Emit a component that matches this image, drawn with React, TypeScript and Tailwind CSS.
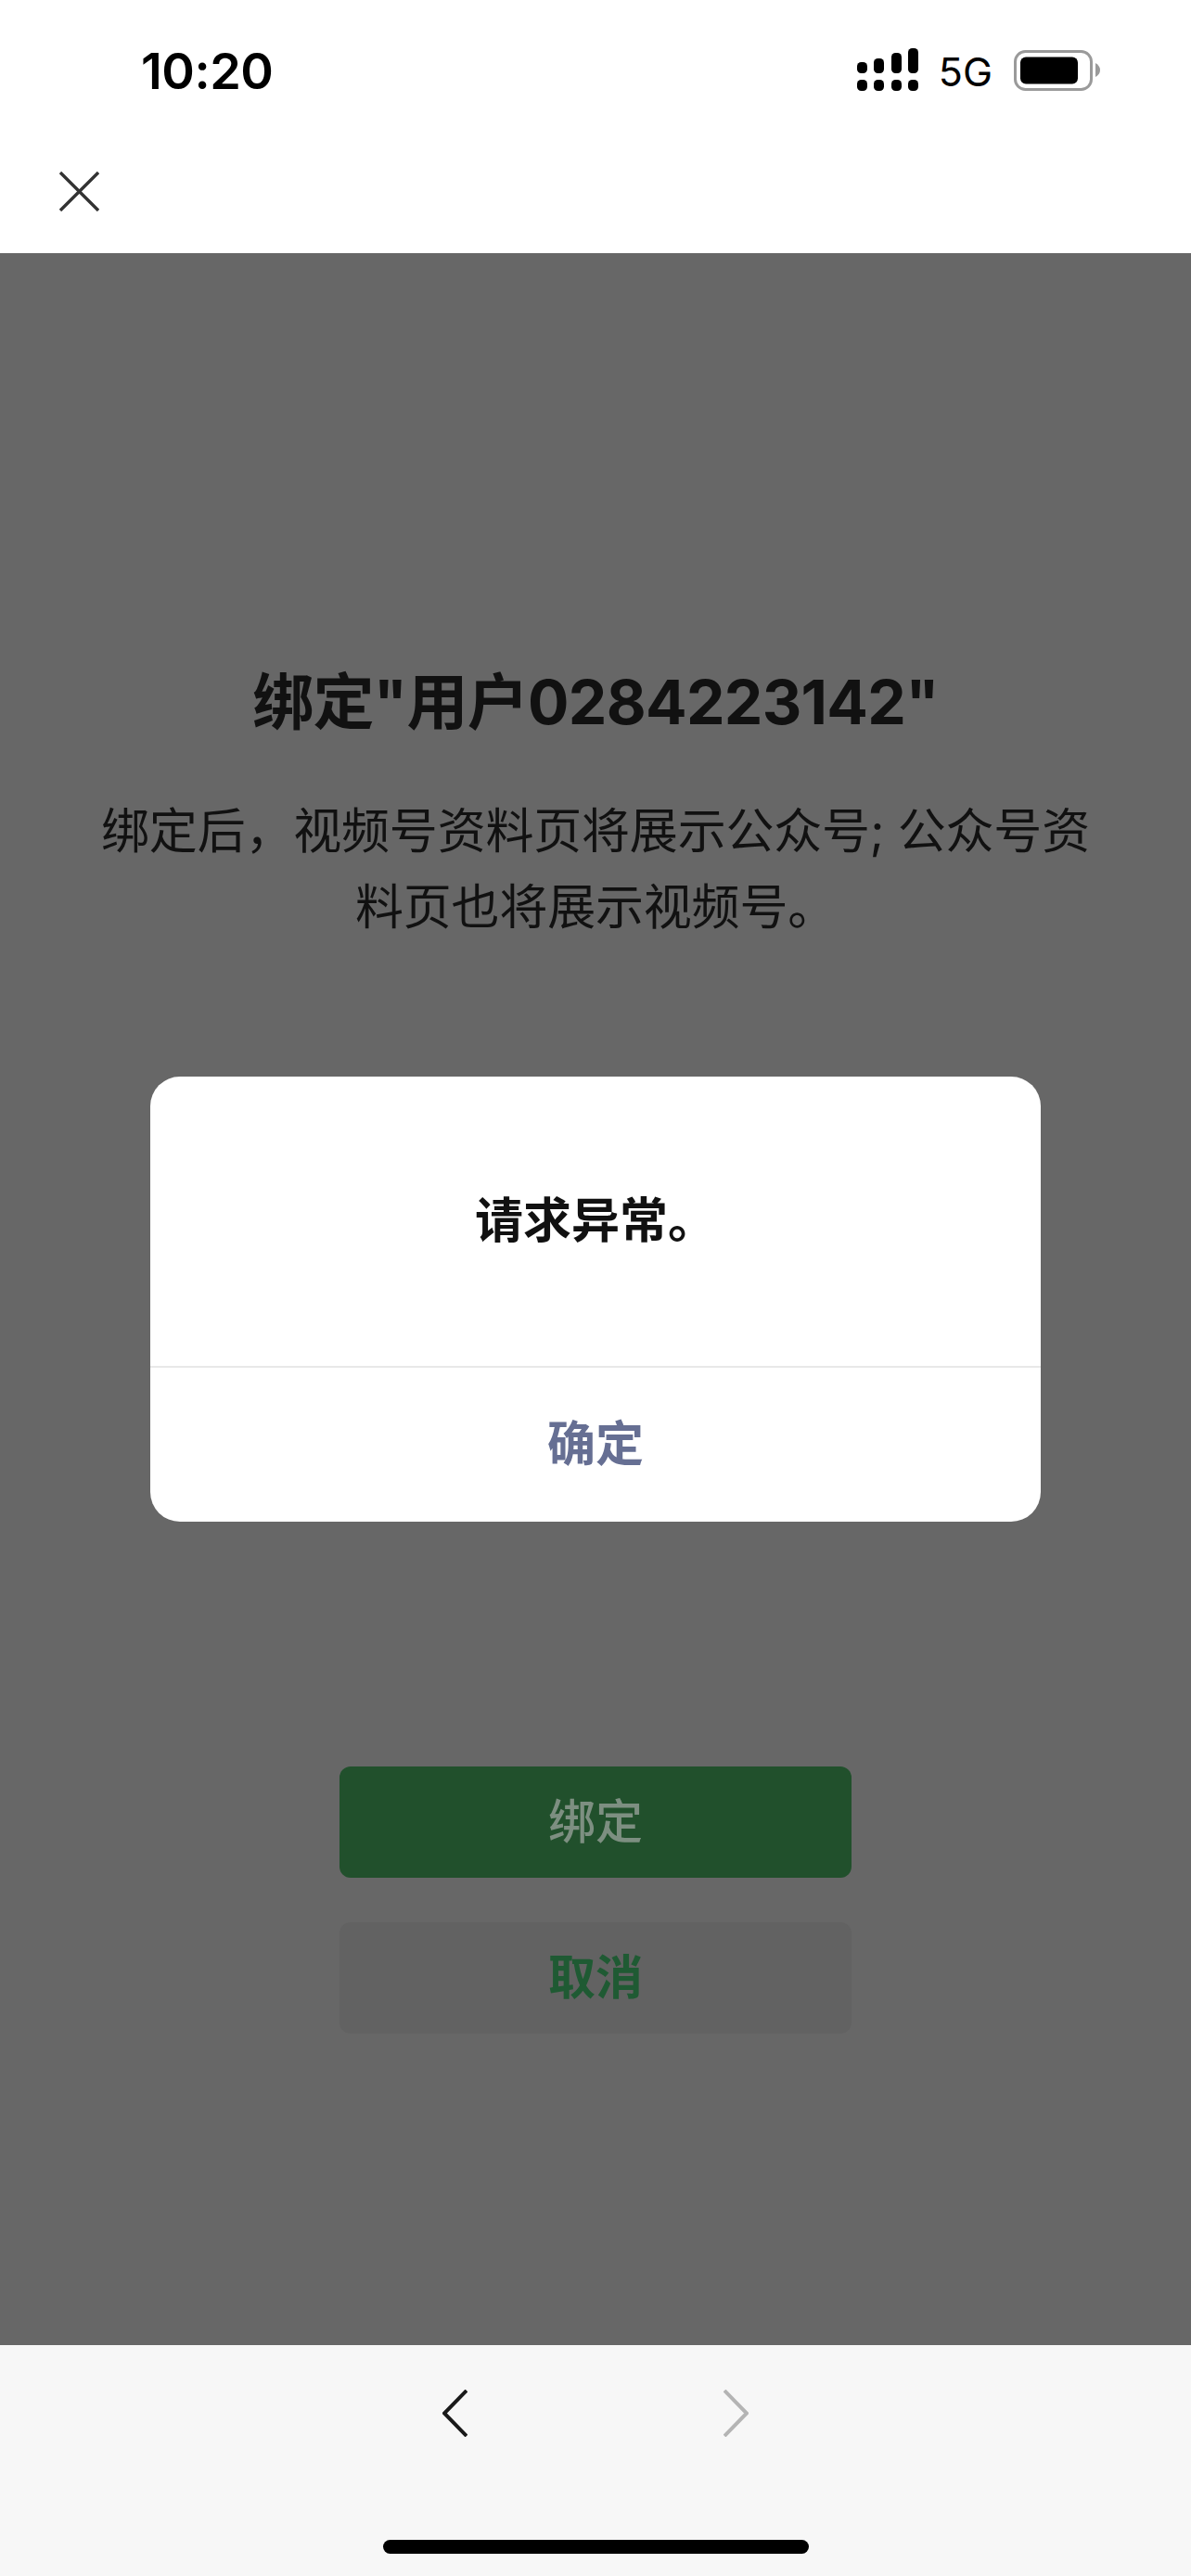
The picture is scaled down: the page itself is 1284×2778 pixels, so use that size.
export default function App() {
  const font = { fontFamily: 'Inter, "Noto Sans CJK SC", sans-serif' };
  return (
    <div style={font} className="flex h-[2778px] w-full flex-col overflow-hidden bg-white">
      <header className="h-[273px] shrink-0 bg-white pt-[46px]">
        <div className="flex h-[60px] items-center pl-[152px] pr-[98px]">
          <span className="translate-y-[1px] text-[54px] font-semibold leading-[60px] tracking-[-0.5px] text-black">10:20</span>
          <div className="ml-auto flex items-center">
            <svg className="-translate-y-[1px]" width="66" height="46" viewBox="0 0 66 46" fill="black">
              <rect x="0" y="34" width="11" height="12" rx="4.5" />
              <rect x="18" y="34" width="11" height="12" rx="4.5" />
              <rect x="37" y="34" width="11" height="12" rx="4.5" />
              <rect x="55" y="34" width="11" height="12" rx="4.5" />
              <rect x="0" y="15" width="11" height="12" rx="4.5" />
              <rect x="18" y="11" width="11" height="16" rx="4.5" />
              <rect x="37" y="5" width="11" height="22" rx="4.5" />
              <rect x="55" y="0" width="11" height="27" rx="4.5" />
            </svg>
            <span className="ml-[22px] translate-y-[1px] text-[43px] leading-[60px] text-black">5G</span>
            <svg className="ml-[23px]" width="93" height="44" viewBox="0 0 93 44">
              <rect x="1.5" y="1.5" width="82" height="41" rx="11" fill="none" stroke="#9a9a9a" strokeWidth="3" />
              <rect x="7" y="7.5" width="62" height="29" rx="6" fill="black" />
              <path d="M88 14 L88 29 Q93 26 93 21.5 Q93 17 88 14 Z" fill="#9a9a9a" />
            </svg>
          </div>
        </div>
        <div className="pl-[64px] pt-[79px]">
          <svg width="43" height="43" viewBox="0 0 43 43" stroke="#333333" strokeWidth="3.4" fill="none">
            <path d="M1 1 L42 42 M42 1 L1 42" />
          </svg>
        </div>
      </header>

      <main className="relative flex flex-1 flex-col items-center bg-[#676767] pt-[439px]">
        <h1 className="text-[66px] font-bold leading-[90px] tracking-[-0.7px] text-[#111111]">绑定"用户0284223142"</h1>
        <p className="mt-[54px] w-[1090px] text-center text-[52px] leading-[82px] tracking-[-0.2px] text-[#111111]">
          绑定后，视频号资料页将展示公众号; 公众号资料页也将展示视频号。
        </p>
        <div className="mt-[885px] flex flex-col gap-[48px]">
          <button className="flex h-[120px] w-[552px] items-center justify-center rounded-[12px] bg-[#21502c] pt-[1px] text-[51px] font-medium text-[#7d8f81]">
            绑定
          </button>
          <button className="flex h-[120px] w-[552px] items-center justify-center rounded-[12px] bg-[#626262] pt-[1px] text-[51px] font-bold text-[#1f5a33]">
            取消
          </button>
        </div>

        <div className="absolute left-[162px] top-[888px] flex h-[480px] w-[960px] flex-col rounded-[32px] bg-white">
          <div className="flex h-[314px] items-center justify-center border-b-2 border-[#e8e8e8]">
            <span className="text-[52px] font-bold leading-[70px] text-[#111111]">请求异常。</span>
          </div>
          <div className="flex flex-1 items-center justify-center text-[52px] font-bold text-[#666f93]">确定</div>
        </div>
      </main>

      <footer className="relative h-[249px] shrink-0 bg-[#f7f7f7]">
        <div className="flex items-start gap-[276px] pl-[477px] pt-[48px]">
          <svg width="27" height="51" viewBox="0 0 27 51" fill="none" stroke="#1a1a1a" strokeWidth="4">
            <path d="M26 1 L2 25.5 L26 50" />
          </svg>
          <svg width="27" height="51" viewBox="0 0 27 51" fill="none" stroke="#b4b4b4" strokeWidth="4">
            <path d="M1 1 L25 25.5 L1 50" />
          </svg>
        </div>
        <div className="absolute bottom-[24px] left-[413px] h-[15px] w-[459px] rounded-full bg-black" />
      </footer>
    </div>
  );
}
